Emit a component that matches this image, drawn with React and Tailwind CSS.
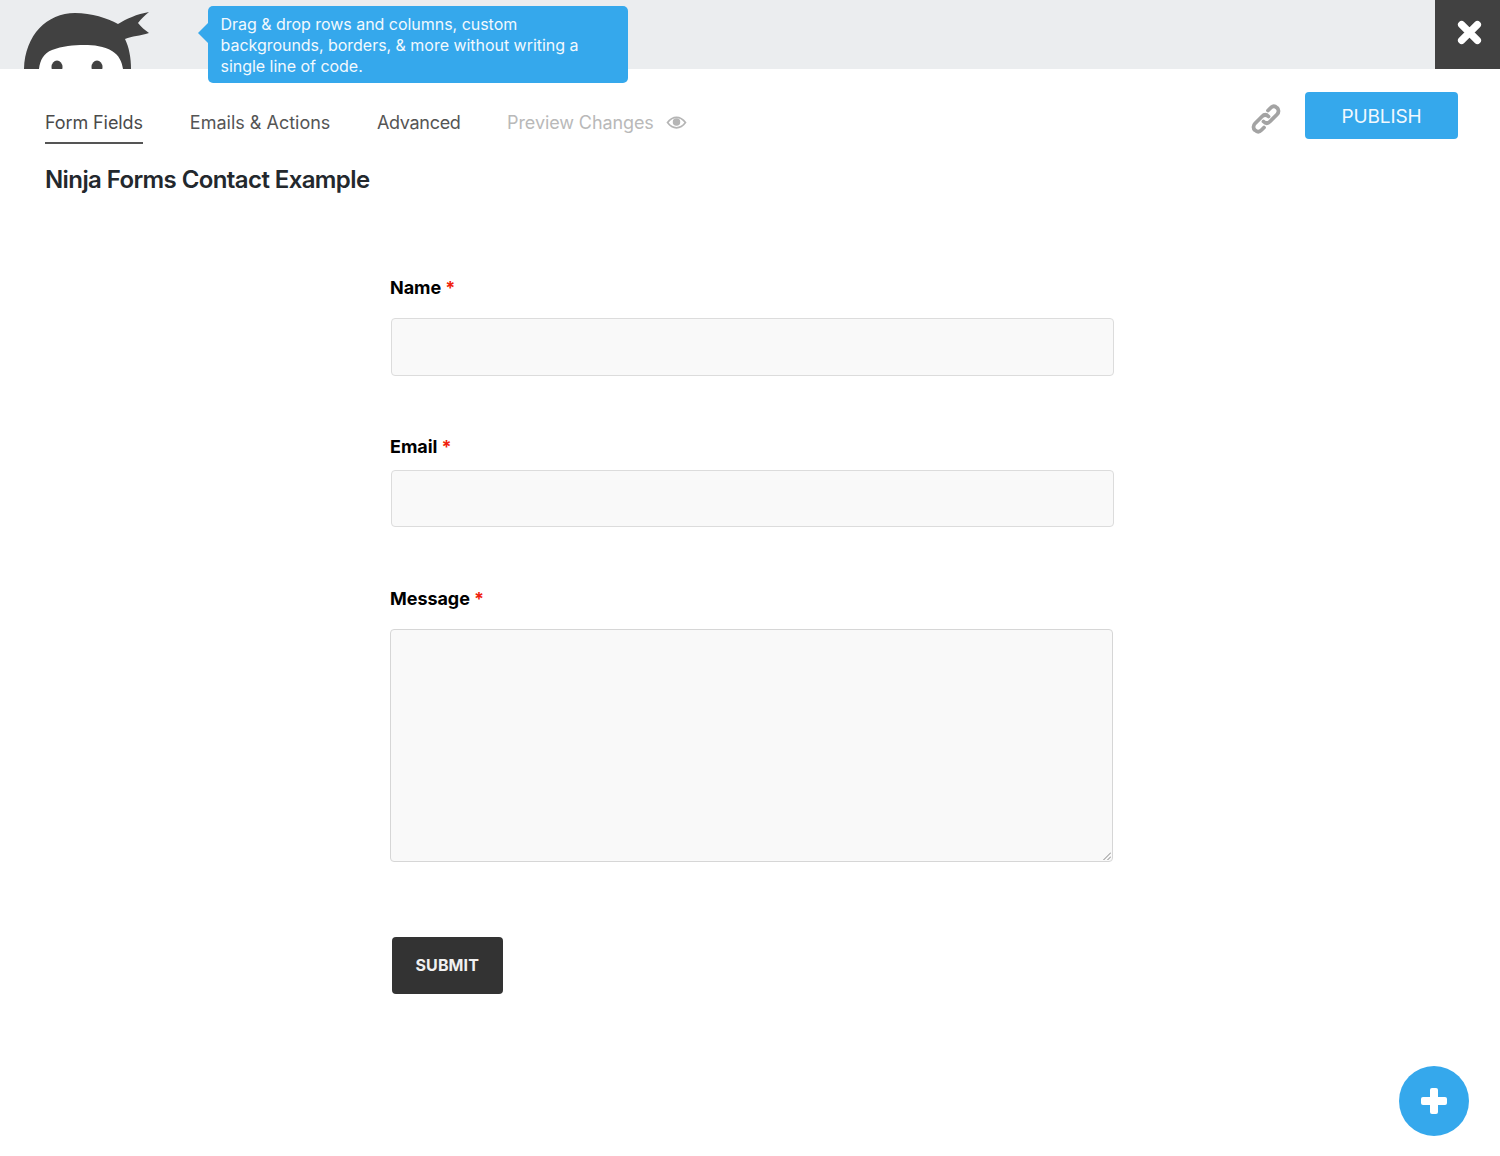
import React from "react";

const Logo = () => (
  <svg viewBox="0 0 130 69" className="absolute left-[22px] top-0 h-[69px] w-[130px]">
    <path d="M2 69 C3 35 25 13 53 13 C70 13 85 18 96 24 C104 19 115 14 127 12 C123 15 119 19 116 23 C119 27 123 30 127 33 C118 36 110 36 103 39 C107 47 109 58 109 69 Z" fill="#414141" />
    <path d="M17 69 C18 60 22 53 30 50 C40 46 52 45 62 45 C72 45 82 46 90 51 C97 55 100 62 101 69 Z" fill="#ffffff" />
    <ellipse cx="35" cy="67" rx="5.500" ry="6.500" fill="#414141" />
    <ellipse cx="75" cy="67" rx="5.500" ry="6.500" fill="#414141" />
  </svg>
);

const Label = ({ children, className }) => (
  <div className={`text-[18px] font-bold leading-[22px] tracking-[-0.05px] text-black ${className}`}>
    {children} <span className="text-[#f01f0e]">*</span>
  </div>
);

export default function App() {
  return (
    <div className="relative h-[1156px] w-[1500px] overflow-hidden bg-white font-['Inter',sans-serif]">
      <header className="relative flex h-[69px] justify-end bg-[#ebedef]">
        <Logo />
        <div className="flex h-[69px] w-[65px] items-center justify-center bg-[#414141]">
          <svg viewBox="0 0 24 24" className="mb-[4px] ml-[4px] h-[27px] w-[27px]">
            <path d="M5 5 L19 19 M19 5 L5 19" stroke="#fff" strokeWidth="6.500" strokeLinecap="round" />
          </svg>
        </div>
      </header>

      <div className="absolute left-[208px] top-[6px] h-[77px] w-[420px] rounded-[5px] bg-[#35a8ec] px-[12.5px] py-[8px] text-[16px] leading-[21px] tracking-[-0.03px] text-[#f2f9fe]">
        <div className="absolute left-[-10px] top-[17px] h-0 w-0 border-y-[10px] border-r-[10px] border-y-transparent border-r-[#35a8ec]" />
        Drag &amp; drop rows and columns, custom<br />
        backgrounds, borders, &amp; more without writing a<br />
        single line of code.
      </div>

      <main className="flex flex-col">
        <div className="flex items-start justify-between pl-[45px] pr-[42px]">
          <nav className="mt-[31px] flex text-[18px]">
            <div className="flex h-[44px] items-center border-b-2 border-[#555555] pt-[2px] tracking-[-0.1px] text-[#4a4a4a]">Form Fields</div>
            <div className="ml-[47px] flex h-[44px] items-center tracking-[0] text-[#555555]">Emails &amp; Actions</div>
            <div className="ml-[46.5px] flex h-[44px] items-center tracking-[-0.3px] text-[#555555]">Advanced</div>
            <div className="ml-[46.5px] flex h-[44px] items-center gap-[12px] tracking-[-0.1px] text-[#b9b9b9]">
              Preview Changes
              <svg viewBox="0 0 24 16" className="h-[15px] w-[21px]">
                <path fillRule="evenodd" d="M0.5 8 C4 3 8 1 12 1 C16 1 20 3 23.500 8 C20 13 16 15 12 15 C8 15 4 13 0.5 8 Z M3 8 C5.500 11.500 8.500 13 12 13 C15.500 13 18.500 11.500 21 8 C18.500 4.500 15.500 3 12 3 C8.500 3 5.500 4.500 3 8 Z" fill="#b5b5b5" />
                <circle cx="12" cy="7.500" r="4.300" fill="#b5b5b5" />
              </svg>
            </div>
          </nav>
          <div className="mt-[23px] flex items-center gap-[23px]">
            <svg viewBox="0 0 32 32" className="mt-[7px] h-[32px] w-[32px]" fill="none" stroke="#a3a3a3" strokeWidth="3.800" strokeLinecap="round">
              <path d="M13.500 18.500 C15.500 20.500 18 20.500 20 18.500 L27 11.500 C29 9.500 29 6.500 27 4.800 C25 3 22.500 3 20.500 5 L18 7.500" />
              <path d="M18.500 13.500 C16.500 11.500 14 11.500 12 13.500 L5 20.500 C3 22.500 3 25.500 5 27.200 C7 29 9.500 29 11.500 27 L14 24.500" />
            </svg>
            <button className="h-[47px] w-[153px] rounded-[4px] bg-[#35a8ec] pt-[3px] text-[19px] tracking-[-0.1px] text-[#f2f9fe]">PUBLISH</button>
          </div>
        </div>

        <h1 className="ml-[45px] mt-[20px] text-[24px] font-semibold leading-[32px] tracking-[-0.6px] text-[#23282d]">Ninja Forms Contact Example</h1>

        <form className="ml-[390px] flex flex-col items-start">
          <Label className="mt-[81px]">Name</Label>
          <div className="ml-px mt-[19px] h-[58px] w-[723px] rounded-[4px] border border-[#dcdcdc] bg-[#f9f9f9]" />
          <Label className="mt-[60px]">Email</Label>
          <div className="ml-px mt-[12px] h-[57px] w-[723px] rounded-[4px] border border-[#dcdcdc] bg-[#f9f9f9]" />
          <Label className="mt-[61px]">Message</Label>
          <div className="relative mt-[19px] h-[233px] w-[723px] rounded-[4px] border border-[#d6d6d6] bg-[#f9f9f9]">
            <svg viewBox="0 0 8 8" className="absolute bottom-[1px] right-[1px] h-[8px] w-[8px]" stroke="#777" strokeWidth="0.9">
              <path d="M0.500 8 L8 0.500 M4.500 8 L8 4.500" />
            </svg>
          </div>
          <button type="button" className="ml-[1.5px] mt-[75px] h-[57px] w-[111.5px] rounded-[4px] bg-[#333333] pb-[1px] text-[16px] font-bold tracking-[0.1px] text-[#f0f0f0]">SUBMIT</button>
        </form>
      </main>

      <button className="absolute left-[1399px] top-[1066px] flex h-[70px] w-[70px] items-center justify-center rounded-full bg-[#35a8ec]">
        <svg viewBox="0 0 28 28" className="mr-[1px] h-[28px] w-[28px]">
          <rect x="1" y="10" width="26" height="8" rx="2" fill="#fff" />
          <rect x="10" y="1" width="8" height="26" rx="2" fill="#fff" />
        </svg>
      </button>
    </div>
  );
}
